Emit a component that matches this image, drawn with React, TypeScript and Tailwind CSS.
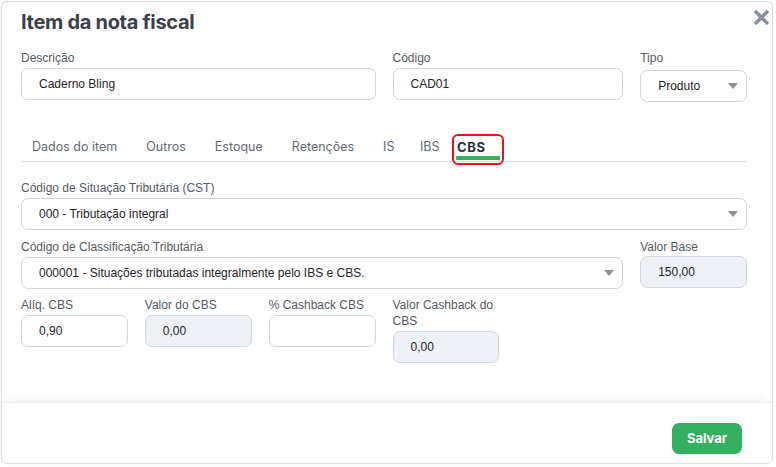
import { useState } from "react";

const sans = { fontFamily: '"Liberation Sans", Arial, sans-serif' };
const geo = { fontFamily: 'Inter, "Noto Sans", sans-serif' };

const tabs = ["Dados do item", "Outros", "Estoque", "Retenções", "IS", "IBS", "CBS"];

function Label({ children }: { children: React.ReactNode }) {
  return <label className="block text-[12px] leading-[16px] text-[#555a60]">{children}</label>;
}

function TextInput({ value, readOnly }: { value: string; readOnly?: boolean }) {
  return (
    <div
      className={`mt-[2px] flex h-[32px] items-center rounded-[7px] border px-[17px] text-[12px] text-[#1f2328] ${
        readOnly ? "border-[#d3d8df] bg-[#eef1f6]" : "border-[#cfd5dd] bg-white"
      }`}
    >
      {value}
    </div>
  );
}

function Select({ value, offset }: { value: string; offset?: boolean }) {
  return (
    <div
      className={`${
        offset ? "mt-[4px]" : "mt-[2px]"
      } flex h-[32px] items-center justify-between rounded-[7px] border border-[#cfd5dd] bg-white pl-[17px] pr-[8px] text-[12px] text-[#1f2328]`}
    >
      <span>{value}</span>
      <svg width="10" height="6" viewBox="0 0 10 6">
        <path d="M0 0h10L5 6z" fill="#8c8f94" />
      </svg>
    </div>
  );
}

export default function App() {
  const [active, setActive] = useState("CBS");

  return (
    <div className="h-[467px] w-[776px] bg-white pl-[1px] pt-[1px]" style={sans}>
      <div className="relative flex h-[463px] w-[772px] flex-col overflow-hidden rounded-[6px] border border-[#dcdcdc] shadow-[0_0_2px_rgba(0,0,0,0.08)]">
        <button className="absolute right-[2px] top-[7px] p-0" aria-label="Fechar">
          <svg width="17" height="17" viewBox="0 0 17 17">
            <path d="M2 2L15 15M15 2L2 15" stroke="#86909c" strokeWidth="3.6" />
          </svg>
        </button>

        <div className="h-[400px] pl-[19px] pr-[25px] pt-[6px]">
          <h1 className="text-[20px] font-bold leading-[28px] tracking-[-0.3px] text-[#3b4049]" style={geo}>
            Item da nota fiscal
          </h1>

          <div className="mt-[14px] grid grid-cols-6 gap-x-[17px]">
            <div className="col-span-3">
              <Label>Descrição</Label>
              <TextInput value="Caderno Bling" />
            </div>
            <div className="col-span-2">
              <Label>Código</Label>
              <TextInput value="CAD01" />
            </div>
            <div className="col-span-1">
              <Label>Tipo</Label>
              <Select value="Produto" offset />
            </div>
          </div>

          <div className="mt-[32px] flex border-b border-[#d9dde3]" style={geo}>
            {tabs.map((t, i) => {
              const on = t === active;
              if (on) {
                return (
                  <button
                    key={t}
                    onClick={() => setActive(t)}
                    className="relative -ml-[2px] w-[52px] pb-[6px] pl-[5px] pt-[5px] text-left text-[13px] font-bold leading-[16px] tracking-[0.6px] text-[#2b2f36]"
                  >
                    {t}
                    <span className="absolute bottom-[1px] left-[4px] right-[4px] h-[4px] rounded-[1px] bg-[#34ae60]" />
                    <span className="absolute -bottom-[4px] left-0 right-0 top-0 rounded-[6px] border-2 border-[#e0161b]" />
                  </button>
                );
              }
              return (
                <button
                  key={t}
                  onClick={() => setActive(t)}
                  className={`pb-[6px] pt-[5px] text-[12.5px] leading-[16px] text-[#646a73] ${
                    i === 0 ? "pl-[11px] pr-[14.5px]" : i === 5 ? "pl-[11px] pr-[14.5px]" : "px-[14.5px]"
                  }`}
                >
                  {t}
                </button>
              );
            })}
          </div>

          <div className="mt-[18px]">
            <Label>Código de Situação Tributária (CST)</Label>
            <Select value="000 - Tributação integral" />
          </div>

          <div className="mt-[9px] grid grid-cols-6 gap-x-[17px]">
            <div className="col-span-5">
              <Label>Código de Classificação Tributária</Label>
              <Select value="000001 - Situações tributadas integralmente pelo IBS e CBS." />
            </div>
            <div className="col-span-1">
              <Label>Valor Base</Label>
              <div className="-mt-[1px]">
                <TextInput value="150,00" readOnly />
              </div>
            </div>
          </div>

          <div className="mt-[8px] grid grid-cols-6 items-start gap-x-[17px]">
            <div>
              <Label>Alíq. CBS</Label>
              <TextInput value="0,90" />
            </div>
            <div>
              <Label>Valor do CBS</Label>
              <TextInput value="0,00" readOnly />
            </div>
            <div>
              <Label>% Cashback CBS</Label>
              <TextInput value="" />
            </div>
            <div>
              <Label>Valor Cashback do CBS</Label>
              <TextInput value="0,00" readOnly />
            </div>
          </div>
        </div>

        <div className="flex flex-1 justify-end border-t border-[#ececec] pr-[30px] pt-[20px] shadow-[0_-8px_10px_-6px_rgba(0,0,0,0.07)]">
          <button
            className="h-[31px] w-[70px] rounded-[7px] bg-[#34ae60] text-[13px] font-bold text-white"
            style={geo}
          >
            Salvar
          </button>
        </div>
      </div>
    </div>
  );
}
